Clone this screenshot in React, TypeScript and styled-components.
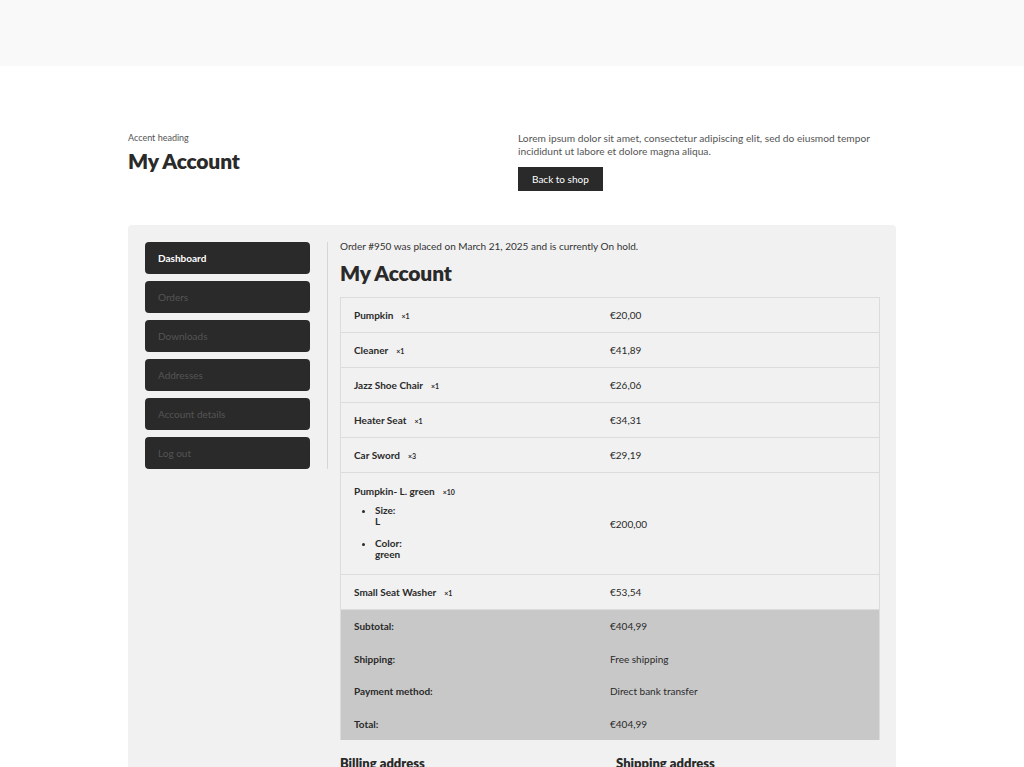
import styled, { createGlobalStyle } from "styled-components";

const GlobalStyle = createGlobalStyle`
    html, body {
        margin: 0;
        padding: 0;
        background: #ffffff;
        font-family: "Lato", "Liberation Sans", sans-serif;
        color: #2a2a2a;
    }
`;

const TopBand = styled.div`
    height: 66px;
    background: #f9f9f9;
`;

const Container = styled.div`
    width: 768px;
    margin: 0 auto;
    padding-top: 66px;
`;

const Hero = styled.header`
    display: grid;
    grid-template-columns: 390px 1fr;
    margin-bottom: 34px;
`;

const Accent = styled.div`
    font-size: 9px;
    color: #555;
    margin-bottom: 5px;
`;

const Title = styled.h1`
    margin: 0;
    font-size: 21px;
    font-weight: 800;
    letter-spacing: -0.2px;
`;

const Intro = styled.p`
    margin: 0 0 9px;
    font-size: 10.2px;
    line-height: 13px;
    color: #555;
`;

const ShopButton = styled.button`
    background: #2a2a2a;
    color: #fff;
    border: none;
    height: 24px;
    padding: 0 14px;
    font-family: inherit;
    font-size: 10px;
`;

const Panel = styled.section`
    background: #f1f1f1;
    border-radius: 4px 4px 0 0;
    padding: 17px 16px 40px 17px;
    display: flex;
    align-items: flex-start;
`;

const Nav = styled.nav`
    width: 165px;
    display: flex;
    flex-direction: column;
    gap: 7px;
    padding-right: 17px;
    border-right: 1px solid #d6d6d6;
`;

const NavItem = styled.a<{ $active?: boolean }>`
    display: flex;
    align-items: center;
    height: 32px;
    padding: 0 13px;
    background: #2a2a2a;
    border-radius: 4px;
    font-size: 10px;
    font-weight: ${(p) => (p.$active ? 700 : 400)};
    color: ${(p) => (p.$active ? "#fff" : "#555")};
`;

const Main = styled.div`
    flex: 1;
    padding-left: 12px;
`;

const Notice = styled.p`
    margin: -2px 0 8px;
    font-size: 10px;
    color: #333;
`;

const SubTitle = styled.h2`
    margin: 0 0 12px;
    font-size: 21px;
    font-weight: 800;
    letter-spacing: -0.2px;
`;

const Table = styled.table`
    width: 100%;
    border-collapse: collapse;
    font-size: 10px;
    border-left: 1px solid #dcdcdc;
    border-right: 1px solid #dcdcdc;
`;

const ItemRow = styled.tr`
    border-top: 1px solid #dcdcdc;
    border-bottom: 1px solid #dcdcdc;
`;

const Cell = styled.td`
    padding: 0 13px;
    height: 34px;
    vertical-align: middle;
`;

const NameCell = styled(Cell)`
    width: 230px;
    font-weight: 700;
`;

const Qty = styled.span`
    font-size: 7px;
    font-weight: 700;
    margin-left: 8px;
`;

const Meta = styled.ul`
    margin: 8px 0 0;
    padding-left: 21px;
    font-weight: 700;
    line-height: 11px;
`;

const MetaItem = styled.li`
    margin-bottom: 11px;
    &:last-child {
        margin-bottom: 0;
    }
`;

const TallCell = styled(NameCell)`
    height: auto;
    padding-top: 12px;
    padding-bottom: 14px;
`;

const TotalRow = styled.tr`
    background: #c8c8c8;
`;

const TotalLabel = styled.th`
    text-align: left;
    padding: 0 13px;
    height: 32.5px;
    font-weight: 700;
`;

const TotalValue = styled.td`
    padding: 0 13px;
    height: 32.5px;
`;

const Addresses = styled.div`
    display: grid;
    grid-template-columns: 276px 1fr;
    margin-top: 15px;
`;

const AddressTitle = styled.h3`
    margin: 0;
    font-size: 13px;
    font-weight: 800;
`;

const items = [
    { name: "Pumpkin", qty: 1, price: "€20,00" },
    { name: "Cleaner", qty: 1, price: "€41,89" },
    { name: "Jazz Shoe Chair", qty: 1, price: "€26,06" },
    { name: "Heater Seat", qty: 1, price: "€34,31" },
    { name: "Car Sword", qty: 3, price: "€29,19" },
];

const totals = [
    ["Subtotal:", "€404,99"],
    ["Shipping:", "Free shipping"],
    ["Payment method:", "Direct bank transfer"],
    ["Total:", "€404,99"],
];

const navLinks = ["Dashboard", "Orders", "Downloads", "Addresses", "Account details", "Log out"];

export default function App() {
    return (
        <>
            <GlobalStyle />
            <TopBand />
            <Container>
                <Hero>
                    <div>
                        <Accent>Accent heading</Accent>
                        <Title>My Account</Title>
                    </div>
                    <div>
                        <Intro>
                            Lorem ipsum dolor sit amet, consectetur adipiscing elit, sed do eiusmod tempor
                            incididunt ut labore et dolore magna aliqua.
                        </Intro>
                        <ShopButton>Back to shop</ShopButton>
                    </div>
                </Hero>
                <Panel>
                    <Nav>
                        {navLinks.map((l, i) => (
                            <NavItem key={l} $active={i === 0}>
                                {l}
                            </NavItem>
                        ))}
                    </Nav>
                    <Main>
                        <Notice>Order #950 was placed on March 21, 2025 and is currently On hold.</Notice>
                        <SubTitle>My Account</SubTitle>
                        <Table>
                            <tbody>
                                {items.map((it) => (
                                    <ItemRow key={it.name}>
                                        <NameCell>
                                            {it.name}
                                            <Qty>×{it.qty}</Qty>
                                        </NameCell>
                                        <Cell>{it.price}</Cell>
                                    </ItemRow>
                                ))}
                                <ItemRow>
                                    <TallCell>
                                        Pumpkin- L. green<Qty>×10</Qty>
                                        <Meta>
                                            <MetaItem>
                                                Size:
                                                <br />L
                                            </MetaItem>
                                            <MetaItem>
                                                Color:
                                                <br />
                                                green
                                            </MetaItem>
                                        </Meta>
                                    </TallCell>
                                    <Cell>€200,00</Cell>
                                </ItemRow>
                                <ItemRow>
                                    <NameCell>
                                        Small Seat Washer<Qty>×1</Qty>
                                    </NameCell>
                                    <Cell>€53,54</Cell>
                                </ItemRow>
                                {totals.map(([k, v]) => (
                                    <TotalRow key={k}>
                                        <TotalLabel>{k}</TotalLabel>
                                        <TotalValue>{v}</TotalValue>
                                    </TotalRow>
                                ))}
                            </tbody>
                        </Table>
                        <Addresses>
                            <AddressTitle>Billing address</AddressTitle>
                            <AddressTitle>Shipping address</AddressTitle>
                        </Addresses>
                    </Main>
                </Panel>
            </Container>
        </>
    );
}
